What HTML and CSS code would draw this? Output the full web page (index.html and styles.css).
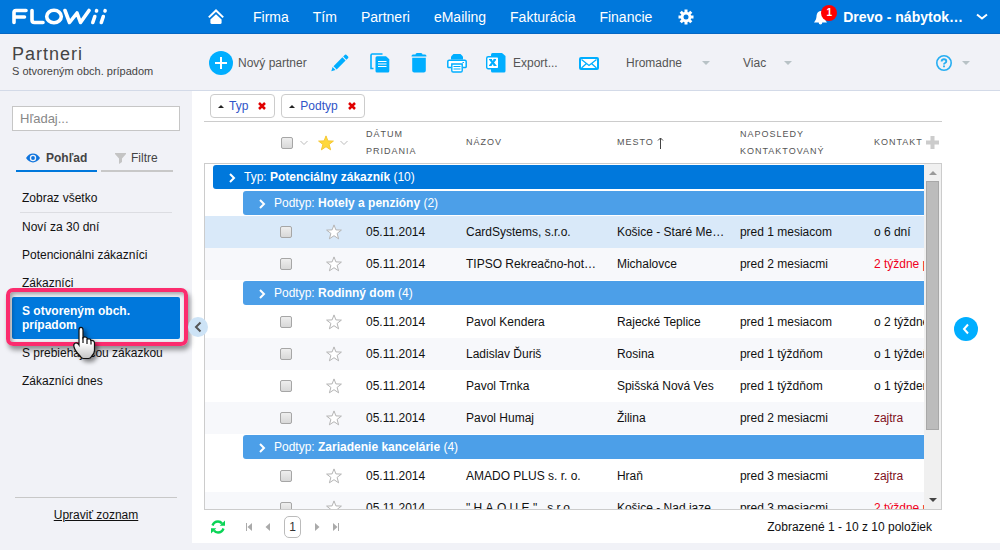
FILE: index.html
```html
<!DOCTYPE html>
<html lang="sk">
<head>
<meta charset="utf-8">
<meta name="viewport" content="width=device-width, initial-scale=1">
<title>Flowii – Partneri</title>
<link rel="stylesheet" href="styles.css">
</head>
<body>
<svg class="defs" width="0" height="0" aria-hidden="true">
  <symbol id="star" viewBox="0 0 16 16"><path d="M8 .900l1.900 5 5.500.2-4.300 3.300 1.500 5.400L8 11.700l-4.600 3.100 1.500-5.400L.6 6.100l5.500-.2z"/></symbol>
  <symbol id="chev" viewBox="0 0 8 10"><path d="M2 1l4 4-4 4"/></symbol>
  <symbol id="down" viewBox="0 0 8 6"><path d="M.500 1L4 4.500 7.500 1"/></symbol>
</svg>

<header class="topbar">
  <a class="logo" href="#" aria-label="Flowii">
    <svg width="96" height="18" viewBox="0 0 96 18" fill="none" stroke="#fff" stroke-width="3.600" stroke-linecap="round" stroke-linejoin="round">
      <path d="M14 2.500H4Q2 2.500 2 4.500V14.500M2.500 9H12.500M20 2.500V12Q20 14.500 22.500 14.500H31"/>
      <ellipse cx="42" cy="8.500" rx="7.300" ry="6.200"/>
      <path d="M53 2.500L57.500 14.500L65 5L68.500 14.500L77 2.500"/>
      <path d="M82.800 8.500L80.800 14.500M91.300 8.500L89.300 14.500M84.600 2.700L84.500 3M93.100 2.700L93 3"/>
    </svg>
  </a>
  <nav class="nav">
    <a class="nav-home" href="#" aria-label="Domov"><svg width="16" height="16" viewBox="0 0 16 16"><path d="M.8 8.400L8 1.500l7.200 6.900" fill="none" stroke="#fff" stroke-width="2"/><path d="M8 5.200l5.600 5.200V13.500q0 1.500-1.500 1.500H3.900q-1.500 0-1.500-1.500V10.400z" fill="#fff"/></svg></a>
    <a href="#">Firma</a><a href="#">Tím</a><a href="#">Partneri</a><a href="#">eMailing</a><a href="#">Fakturácia</a><a href="#">Financie</a>
    <a class="nav-gear" href="#" aria-label="Nastavenia"><svg width="16" height="16" viewBox="0 0 16 16"><g stroke="#fff" stroke-width="3"><path d="M8 .500v15M.500 8h15M2.700 2.700l10.600 10.600M13.300 2.700L2.700 13.300"/></g><circle cx="8" cy="8" r="5.300" fill="#fff"/><circle cx="8" cy="8" r="2.500" fill="#0078dc"/></svg></a>
  </nav>
  <div class="account">
    <button class="bell" type="button" aria-label="Upozornenia">
      <svg width="14" height="16" viewBox="0 0 14 16" fill="#fff"><path d="M6.500 2C3.500 2.400 2.700 5 2.500 7.500 2.300 10 1.500 11.500 0 13.500h13c-1.500-2-2.300-3.500-2.500-6C10.300 5 9.500 2.400 6.500 2z"/><circle cx="6.500" cy="13.700" r="1.800"/></svg>
      <span class="badge">1</span>
    </button>
    <button class="company" type="button">Drevo - nábytok…<svg width="12" height="8" viewBox="0 0 12 8" fill="none" stroke="#fff" stroke-width="2"><path d="M1 1.500l5 4 5-4"/></svg></button>
  </div>
</header>

<div class="toolbar">
  <div class="heading"><h1>Partneri</h1><p>S otvoreným obch. prípadom</p></div>
  <div class="tools">
    <button type="button" class="t-new"><svg width="24" height="24" viewBox="0 0 24 24"><circle cx="12" cy="12" r="12" fill="#00aeff"/><path d="M12 6v12M6 12h12" stroke="#fff" stroke-width="2"/></svg>Nový partner</button>
    <button type="button" class="t-edit" aria-label="Upraviť"><svg width="18" height="18" viewBox="0 0 18 18" fill="#00aeff"><path d="M.3 17.300l1.300-4.200 2.900 2.900zM2.500 12.200L11.400 3.300l3.200 3.200-8.900 8.900zM12.200 2.500L14 .7q.7-.5 1.300.1l1.800 1.800q.6.6.1 1.300l-1.800 1.800z"/></svg></button>
    <button type="button" class="t-copy" aria-label="Kopírovať"><svg width="20" height="20" viewBox="0 0 20 20"><path d="M12.500 1H2.200Q1 1 1 2.200V15.500H3.500" fill="none" stroke="#00aeff" stroke-width="1.600"/><path d="M7 3.200H16l3.300 3V18q0 1.500-1.500 1.500H7Q5.500 19.500 5.500 18V4.700Q5.500 3.200 7 3.200z" fill="#00aeff"/><path d="M8 8.500h8.500M8 11h8.500M8 13.500h8.500" stroke="#fff"/></svg></button>
    <button type="button" class="t-trash" aria-label="Odstrániť"><svg width="16" height="20" viewBox="0 0 16 20" fill="#00aeff"><path d="M4.500 1.500Q4.500 0 6 0h4q1.500 0 1.500 1.500h2.500q1.500 0 1.500 2H.5q0-2 1.500-2zM1.200 4.700h13.600V17.500q0 2-2 2H3.200q-2 0-2-2z"/></svg></button>
    <button type="button" class="t-print" aria-label="Tlačiť"><svg width="20" height="20" viewBox="0 0 20 20"><path d="M4 6.500V3.500L6.500 1h7L16 3.500v3z" fill="#00aeff"/><path d="M4 14.500H1.500Q.8 14.500.8 13.800V8.500Q.8 7.200 2.200 7.200h15.600q1.400 0 1.400 1.300v5.300q0 .7-.7.7H16" fill="#fff" stroke="#00aeff" stroke-width="1.500"/><path d="M4.800 11h10.400v6.700q0 1.300-1.300 1.300H6.100q-1.300 0-1.300-1.300z" fill="#fff" stroke="#00aeff" stroke-width="1.400"/><path d="M6.500 13.500h7M6.500 16h7M15.500 9.500h1.500" stroke="#00aeff" stroke-width="1.200"/></svg></button>
    <button type="button" class="t-export"><svg width="20" height="20" viewBox="0 0 20 20"><path d="M5 1.500Q5 0 6.500 0H16l3.500 3V18q0 1.500-1.500 1.500H6.500Q5 19.500 5 18z" fill="#00aeff"/><rect x=".700" y="3.700" width="12" height="12" rx="1.500" fill="#fff" stroke="#00aeff" stroke-width="1.400"/><path d="M4.200 6.500l5 6M9.200 6.500l-5 6" stroke="#00aeff" stroke-width="2"/><path d="M3 6.500h3M7.500 6.500h2.500M3 12.500h2.500M7.500 12.500h3" stroke="#00aeff"/></svg>Export...</button>
    <button type="button" class="t-mail" aria-label="E-mail"><svg width="20" height="13" viewBox="0 0 20 13" fill="none" stroke="#00aeff"><rect x="1" y="1" width="18" height="11" rx="1" stroke-width="2" fill="#fff"/><path d="M2.500 2.500L10 8.500l7.500-6M2.500 11l5-4.500M17.500 11l-5-4.500" stroke-width="1.300"/></svg></button>
    <button type="button" class="menu">Hromadne<i class="caret"></i></button>
    <button type="button" class="menu menu-more">Viac<i class="caret"></i></button>
    <button type="button" class="help" aria-label="Pomocník"><svg width="16" height="16" viewBox="0 0 16 16" fill="none" stroke="#27aef2"><circle cx="8" cy="8" r="7.200" stroke-width="1.600"/><path d="M5.600 6.500Q5.800 4.300 8 4.300t2.300 1.900Q10.300 7.300 9 8 8 8.500 8 9.600M8 10.600v1.700" stroke-width="1.900"/></svg><i class="caret"></i></button>
  </div>
</div>

<div class="page">
  <aside class="sidebar">
    <input class="search" type="search" placeholder="Hľadaj..." aria-label="Hľadaj">
    <div class="tabs">
      <button type="button" class="tab tab-on"><svg width="14" height="10" viewBox="0 0 14 10"><path d="M0 5Q3 .600 7 .600T14 5Q11 9.400 7 9.400T0 5z" fill="#0f74dd"/><circle cx="7" cy="5" r="3.200" fill="#f1f2f7"/><circle cx="7" cy="5" r="1.900" fill="#0f74dd"/></svg>Pohľad</button>
      <button type="button" class="tab"><svg width="11" height="11" viewBox="0 0 11 11" fill="#c4c4c4"><path d="M0 0h11v1L7 5.500V9L4 11V5.500L0 1z"/></svg>Filtre</button>
    </div>
    <ul class="views">
      <li class="all"><a href="#">Zobraz všetko</a></li>
      <li><a href="#">Noví za 30 dní</a></li>
      <li><a href="#">Potencionálni zákazníci</a></li>
      <li><a href="#">Zákazníci</a></li>
      <li class="current"><a href="#">S otvoreným obch. prípadom</a><span class="marker"></span>
        <svg class="pointer" width="26" height="36" viewBox="0 0 26 36"><defs><linearGradient id="hand" x1="0" y1="0" x2="0" y2="1"><stop offset=".5" stop-color="#fff"/><stop offset="1" stop-color="#c4c4c4"/></linearGradient></defs><path d="M7 20V5q0-2.700 2-2.700T11 5v8q1-1.500 3-.800 1.500.5 1.500 1.800 3-.8 3.500 1.500 3.500-.5 3.500 3v7q0 3-3 6-1 2-3 2h-5q-2 0-3-2Q3 26 2 22q-1-3 1.500-4 2-.5 3.500 2z" fill="url(#hand)" stroke="#111" stroke-width="1.200"/><path d="M11 12v6M15 13.500V19M19 15v4.500" stroke="#111" stroke-width="1.200"/></svg>
      </li>
      <li><a href="#">S prebiehajúcou zákazkou</a></li>
      <li><a href="#">Zákazníci dnes</a></li>
    </ul>
    <div class="edit-list"><a href="#">Upraviť zoznam</a></div>
    <button class="collapse" type="button" aria-label="Skryť panel"><svg width="8" height="12" viewBox="0 0 8 12" fill="none" stroke="#555" stroke-width="2"><path d="M6.500 1.500L2 6l4.500 4.500"/></svg></button>
  </aside>

  <main class="content">
    <section class="grid">
      <div class="chips">
        <button type="button" class="chip"><i class="up"></i>Typ<svg width="8" height="8" viewBox="0 0 8 8"><path d="M1 1l6 6M7 1L1 7" stroke="#e00000" stroke-width="2.500"/></svg></button>
        <button type="button" class="chip"><i class="up"></i>Podtyp<svg width="8" height="8" viewBox="0 0 8 8"><path d="M1 1l6 6M7 1L1 7" stroke="#e00000" stroke-width="2.500"/></svg></button>
      </div>
      <div class="head">
        <table>
          <colgroup><col class="c-check"><col class="c-star"><col class="c-date"><col><col class="c-city"><col class="c-last"><col class="c-next"></colgroup>
          <thead><tr>
            <th><span class="pick pick-check"><input type="checkbox" aria-label="Vybrať všetko"><svg class="drop" width="8" height="6"><use href="#down"/></svg></span></th>
            <th><span class="pick pick-star"><svg class="gold" width="16" height="16"><use href="#star"/></svg><svg class="drop" width="8" height="6"><use href="#down"/></svg></span></th>
            <th>Dátum pridania</th><th>Názov</th>
            <th>Mesto <svg class="sort" width="7" height="12" viewBox="0 0 7 12" fill="none" stroke="#444"><path d="M3.500 12V1M1 3.500l2.500-2.500L6 3.500"/></svg></th>
            <th>Naposledy kontaktovaný</th><th class="cut">Kontakt</th>
          </tr></thead>
        </table>
        <button class="add" type="button" aria-label="Pridať stĺpec"><svg width="13" height="13" viewBox="0 0 13 13"><path d="M6.500 0v13M0 6.500h13" stroke="#ccc" stroke-width="4"/></svg></button>
      </div>
      <div class="body">
        <div class="rows">
        <table>
          <colgroup><col class="c-check"><col class="c-star"><col class="c-date"><col><col class="c-city"><col class="c-last"><col class="c-next"></colgroup>
          <tbody>
            <tr class="group"><td colspan="7"><div><svg width="8" height="10"><use href="#chev"/></svg>Typ: <b>Potenciálny zákazník</b> (10)</div></td></tr>
            <tr class="group sub"><td colspan="7"><div><svg width="8" height="10"><use href="#chev"/></svg>Podtyp: <b>Hotely a penzióny</b> (2)</div></td></tr>
            <tr class="hover"><td><input type="checkbox" aria-label="CardSystems"></td><td><svg class="fav" width="16" height="16"><use href="#star"/></svg></td><td>05.11.2014</td><td>CardSystems, s.r.o.</td><td>Košice - Staré Me…</td><td>pred 1 mesiacom</td><td>o 6 dní</td></tr>
            <tr class="alt"><td><input type="checkbox" aria-label="TIPSO"></td><td><svg class="fav" width="16" height="16"><use href="#star"/></svg></td><td>05.11.2014</td><td>TIPSO Rekreačno-hot…</td><td>Michalovce</td><td>pred 2 mesiacmi</td><td class="late">2 týždne po</td></tr>
            <tr class="group sub"><td colspan="7"><div><svg width="8" height="10"><use href="#chev"/></svg>Podtyp: <b>Rodinný dom</b> (4)</div></td></tr>
            <tr><td><input type="checkbox" aria-label="Pavol Kendera"></td><td><svg class="fav" width="16" height="16"><use href="#star"/></svg></td><td>05.11.2014</td><td>Pavol Kendera</td><td>Rajecké Teplice</td><td>pred 1 mesiacom</td><td>o 2 týždne</td></tr>
            <tr class="alt"><td><input type="checkbox" aria-label="Ladislav Ďuriš"></td><td><svg class="fav" width="16" height="16"><use href="#star"/></svg></td><td>05.11.2014</td><td>Ladislav Ďuriš</td><td>Rosina</td><td>pred 1 týždňom</td><td>o 1 týždeň</td></tr>
            <tr><td><input type="checkbox" aria-label="Pavol Trnka"></td><td><svg class="fav" width="16" height="16"><use href="#star"/></svg></td><td>05.11.2014</td><td>Pavol Trnka</td><td>Spišská Nová Ves</td><td>pred 1 týždňom</td><td>o 1 týždeň</td></tr>
            <tr class="alt"><td><input type="checkbox" aria-label="Pavol Humaj"></td><td><svg class="fav" width="16" height="16"><use href="#star"/></svg></td><td>05.11.2014</td><td>Pavol Humaj</td><td>Žilina</td><td>pred 2 mesiacmi</td><td class="soon">zajtra</td></tr>
            <tr class="group sub"><td colspan="7"><div><svg width="8" height="10"><use href="#chev"/></svg>Podtyp: <b>Zariadenie kancelárie</b> (4)</div></td></tr>
            <tr><td><input type="checkbox" aria-label="AMADO PLUS"></td><td><svg class="fav" width="16" height="16"><use href="#star"/></svg></td><td>05.11.2014</td><td>AMADO PLUS s. r. o.</td><td>Hraň</td><td>pred 3 mesiacmi</td><td class="soon">zajtra</td></tr>
            <tr class="alt"><td><input type="checkbox" aria-label="H.A.Q.U.E."></td><td><svg class="fav" width="16" height="16"><use href="#star"/></svg></td><td>05.11.2014</td><td>" H.A.Q.U.E." , s.r.o.</td><td>Košice - Nad jaze…</td><td>pred 3 mesiacmi</td><td class="late">2 týždne po</td></tr>
          </tbody>
        </table>
        </div>
        <div class="scroll" aria-hidden="true"><i class="arrow arrow-up"></i><span class="track"><span class="thumb"></span></span><i class="arrow arrow-down"></i></div>
      </div>
      <footer class="pager">
        <button type="button" class="refresh" aria-label="Obnoviť"><svg width="14" height="14" viewBox="0 0 14 14"><path d="M1.500 5.500Q3 1.500 7 1.500q2.500 0 4 2M12.500 8.500Q11 12.500 7 12.500q-2.500 0-4-2" fill="none" stroke="#0ad456" stroke-width="2.400"/><path d="M14 .500v5.300H8.700zM0 13.500V8.200h5.300z" fill="#0ad456"/></svg></button>
        <button type="button" aria-label="Prvá"><svg width="6" height="8" viewBox="0 0 6 8" fill="#aaa"><path d="M0 0h1v8H0zM6 0v8L1.500 4z"/></svg></button>
        <button type="button" aria-label="Predchádzajúca"><svg width="6" height="8" viewBox="0 0 6 8" fill="#aaa"><path d="M5 0v8L.500 4z"/></svg></button>
        <button type="button" class="num">1</button>
        <button type="button" aria-label="Ďalšia"><svg width="6" height="8" viewBox="0 0 6 8" fill="#aaa"><path d="M1 0v8l4.500-4z"/></svg></button>
        <button type="button" aria-label="Posledná"><svg width="6" height="8" viewBox="0 0 6 8" fill="#aaa"><path d="M5 0h1v8H5zM0 0v8l4.500-4z"/></svg></button>
        <span class="count">Zobrazené 1 - 10 z 10 položiek</span>
      </footer>
    </section>
    <div class="rail"><button type="button" aria-label="Zobraziť panel"><svg width="8" height="12" viewBox="0 0 8 12" fill="none" stroke="#fff" stroke-width="2"><path d="M6 1.500L2 6l4 4.500"/></svg></button></div>
  </main>
</div>
</body>
</html>
```
FILE: styles.css
```css
* { box-sizing: border-box; }
body {
  margin: 0;
  height: 100vh;
  display: flex;
  flex-direction: column;
  overflow: hidden;
  background: #f1f2f7;
  color: #111;
  font: 12px/14px "Liberation Sans", Arial, sans-serif;
}
.defs { position: absolute; }
svg { display: block; flex: none; }
a { color: inherit; text-decoration: none; }
button { display: flex; align-items: center; padding: 0; border: 0; background: none; color: inherit; font: inherit; }

.topbar {
  flex: none;
  display: flex;
  align-items: center;
  height: 34px;
  padding: 0 12px;
  background: #0078dc;
  border-bottom: 1px solid #0568c4;
  color: #fff;
  font-size: 14px;
}
.logo { width: 196px; }
.nav { display: flex; align-items: center; gap: 24px; }
.nav-home { margin-right: 5px; }
.nav-gear { margin-left: 2px; }
.account { display: flex; align-items: center; margin-left: auto; gap: 15px; font-weight: bold; }
.bell { position: relative; }
.badge {
  position: absolute;
  left: 7px;
  top: -4px;
  width: 16px;
  height: 16px;
  border-radius: 8px;
  background: #f00;
  color: #fff;
  font: bold 10px/16px "Liberation Sans", Arial, sans-serif;
  text-align: center;
}
.company { gap: 13px; }

.toolbar {
  flex: none;
  display: flex;
  height: 57px;
  padding-left: 12px;
  border-bottom: 1px solid #d3dae8;
}
.heading { width: 197px; padding-top: 10px; color: #444; }
.heading h1 { margin: 0; font-size: 18px; font-weight: normal; line-height: 20px; letter-spacing: 1px; }
.heading p { margin: 0; font-size: 11px; }
.tools { flex: 1; display: flex; align-items: center; padding: 2px 30px 0 0; color: #555; }
.t-new { gap: 5px; width: 122px; }
.t-edit { width: 39px; }
.t-copy { width: 41px; }
.t-trash { width: 36px; }
.t-print { width: 39px; }
.t-export { gap: 7px; width: 93px; }
.t-mail { width: 47px; }
.menu { gap: 20px; width: 117px; }
.menu-more { width: 52px; gap: 18px; }
.help { gap: 10px; margin-left: auto; }
.caret { border: 4px solid transparent; border-top-color: #b8c2c6; border-bottom: 0; }

.page { flex: 1; min-height: 0; display: flex; padding-bottom: 7px; }
.sidebar { position: relative; width: 192px; flex: none; display: flex; flex-direction: column; padding: 15px 12px 0; }
.search {
  width: 100%;
  height: 25px;
  padding: 0 7px;
  border: 1px solid #c6c6c6;
  background: #fff;
  font: 13px "Liberation Sans", Arial, sans-serif;
}
.search::placeholder { color: #888; }
.tabs { display: flex; gap: 4px; padding: 15px 7px 0 4px; }
.tab { flex: 1; height: 26px; gap: 5px; padding-left: 14px; border-bottom: 2px solid #c8c8c8; color: #444; }
.tab-on { flex: none; width: 81px; gap: 6px; padding-left: 10px; border-color: #0078dc; font-weight: bold; }
.views { margin: 12px 0 0; padding: 0; list-style: none; }
.views a { display: block; padding: 7px 10px; }
.all { margin: 0 8px 0; border-bottom: 1px solid #dcdde2; }
.views .all a { padding: 7px 2px; }
.current { position: relative; border-radius: 2px; background: #0078dc; color: #fff; font-weight: bold; }
.views .current a { padding-right: 40px; }
.marker {
  position: absolute;
  inset: -9px -8px -7px -6px;
  border: 4px solid #fb2c6e;
  border-radius: 7px;
  box-shadow: 2px 4px 5px rgba(0, 0, 0, .4), inset 2px 2px 4px rgba(0, 0, 0, .35);
}
.pointer { position: absolute; left: 60px; top: 28px; filter: drop-shadow(3px 3px 2px rgba(0, 0, 0, .45)); }
.edit-list { margin: auto 3px 21px; padding-top: 10px; border-top: 1px solid #c8c8c8; text-align: center; }
.edit-list a { text-decoration: underline; }
.collapse {
  position: absolute;
  right: -16px;
  top: 226px;
  width: 20px;
  height: 20px;
  border-radius: 10px;
  justify-content: center;
  background: #cde3f6;
}

.content { flex: 1; min-width: 0; display: flex; background: #fff; }
.grid { flex: 1; min-width: 0; display: flex; flex-direction: column; padding: 3px 0 0 12px; }
.chips { display: flex; gap: 6px; padding: 0 6px 3px; }
.chip { height: 24px; gap: 5px; padding: 0 8px 0 7px; border: 1px solid #ccc; border-radius: 4px; color: #2f55c8; }
.chip svg { margin-left: 5px; }
.up { border: 3px solid transparent; border-bottom-color: #222; border-top: 0; }
.head { display: flex; align-items: center; height: 42px; border-top: 1px solid #ccc; padding: 0 2px 0 1px; }
table { flex: 1; min-width: 0; width: 100%; table-layout: fixed; border-collapse: collapse; }
.c-check { width: 100px; }
.c-star { width: 53px; }
.c-date { width: 100px; }
.c-city { width: 123px; }
.c-last { width: 134px; }
.c-next { width: 58px; }
th {
  padding: 0 8px;
  color: #555;
  font-size: 9px;
  font-weight: normal;
  line-height: 17px;
  letter-spacing: 1px;
  text-align: left;
  text-transform: uppercase;
}
th.cut { padding-right: 4px; overflow: hidden; }
.sort { display: inline-block; vertical-align: middle; }
.pick { display: flex; align-items: center; gap: 7px; }
.pick-check { padding-left: 68px; }
.pick-star { padding-left: 5px; gap: 6px; }
.gold { fill: #ffd83b; stroke: #f5c733; stroke-width: 1; }
.drop { fill: none; stroke: #bbb; stroke-width: 1; }
.add { flex: none; width: 16px; justify-content: center; }
input[type="checkbox"] {
  appearance: none;
  display: block;
  flex: none;
  width: 12px;
  height: 12px;
  margin: 0;
  border: 1px solid #a6a6a6;
  border-radius: 2px;
  background: linear-gradient(#eee, #d8d8d8);
}
.body { flex: 1; min-height: 0; display: flex; border: 1px solid #ccc; }
.rows { flex: 1; min-width: 0; overflow: hidden; }
td { height: 32px; padding: 0 0 0 8px; white-space: nowrap; overflow: hidden; }
td:first-child { padding-left: 75px; }
td:nth-child(2) { padding-left: 21px; }
.fav { fill: #fff; stroke: #b4b4b4; stroke-width: 1; }
.hover { background: #d9e9f9; }
.alt { background: #f7f8fb; }
.late { color: #f00020; }
.soon { color: #801020; }
.group td:first-child { height: 26px; padding: 0 0 0 8px; }
.group.sub td:first-child { padding-left: 38px; }
.group div { height: 24px; padding-left: 15px; border-radius: 3px 0 0 3px; background: #0078dc; color: #fff; line-height: 24px; }
.group.sub div { background: #4c9fe8; }
.group svg { display: inline-block; margin-right: 8px; vertical-align: middle; fill: none; stroke: #fff; stroke-width: 2; }
.scroll { flex: none; width: 17px; display: flex; flex-direction: column; align-items: center; background: #f0f0f0; }
.track { flex: 1; width: 13px; }
.thumb { display: block; height: 80%; border: 1px solid #a8a8a8; background: #bcbcbc; }
.arrow { border: 4px solid transparent; }
.arrow-up { margin: 7px 0 6px; border-top: 0; border-bottom-color: #999; }
.arrow-down { margin: 6px 0 7px; border-bottom: 0; border-top-color: #444; }
.pager { display: flex; align-items: center; gap: 13px; height: 33px; padding: 0 10px 0 7px; }
.refresh { margin-right: 8px; }
.num { width: 17px; height: 22px; justify-content: center; border: 1px solid #bbb; border-radius: 5px; color: #333; }
.count { margin-left: auto; }
.rail { flex: none; width: 58px; display: flex; align-items: center; padding: 24px 0 0 12px; }
.rail button { width: 24px; height: 24px; border-radius: 12px; justify-content: center; background: #00aeff; }
```
